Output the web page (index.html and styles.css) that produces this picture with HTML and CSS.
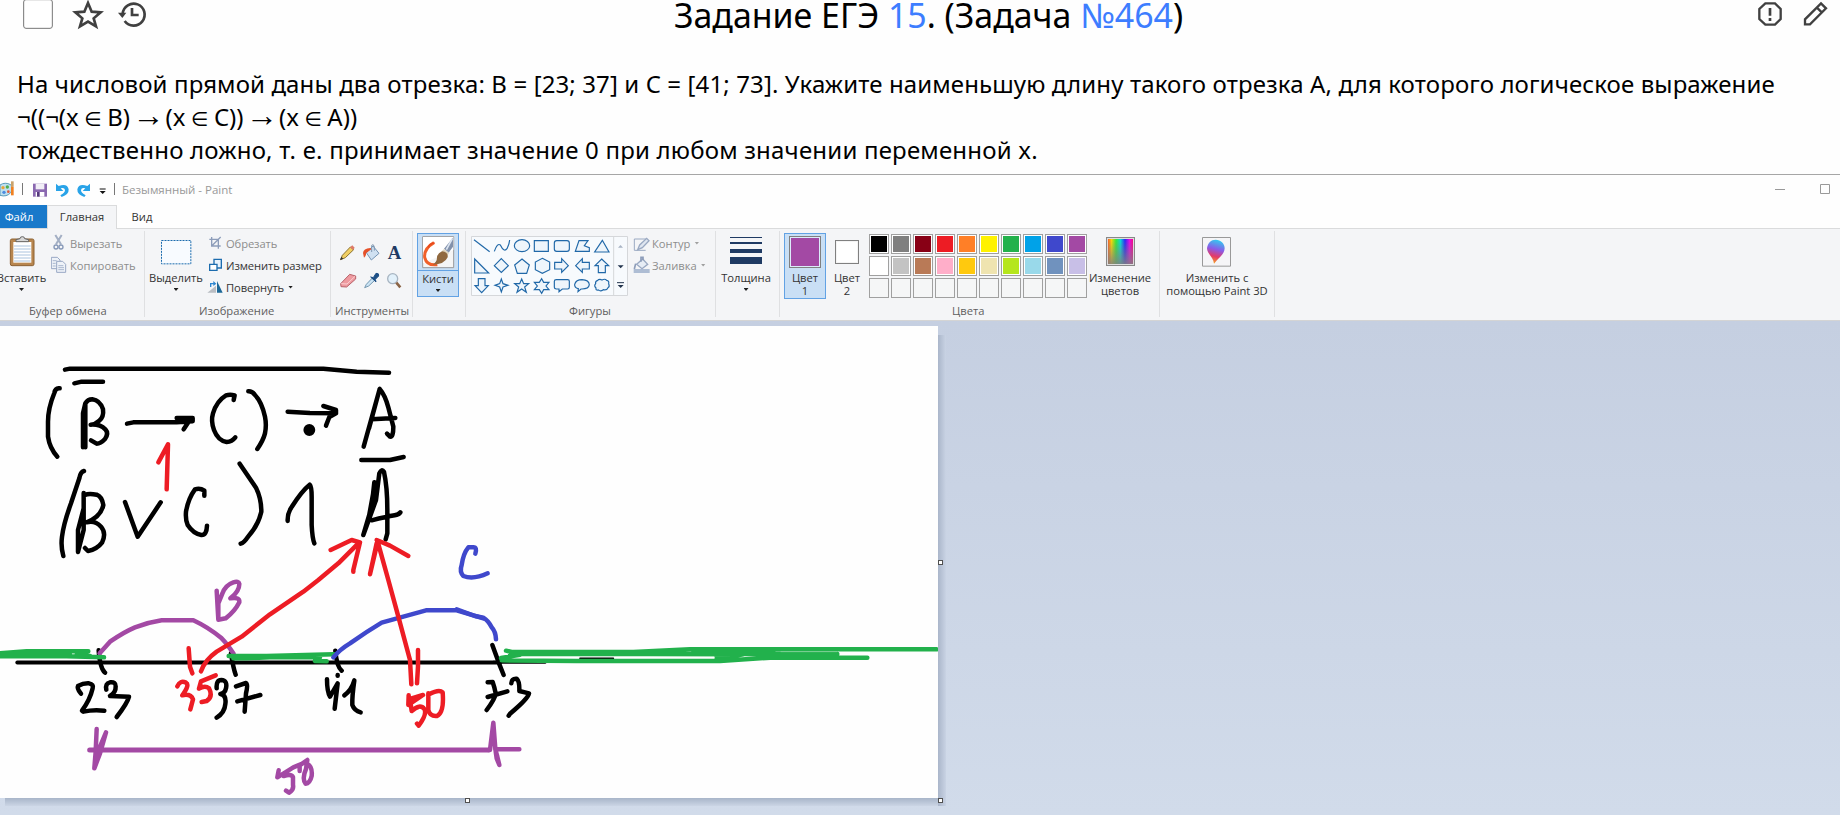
FILE: index.html
```html
<!DOCTYPE html>
<html lang="ru">
<head>
<meta charset="utf-8">
<title>Задание ЕГЭ 15</title>
<link rel="stylesheet" href="styles.css">
</head>
<body>
<header class="task-head">
  <svg class="head-left" width="150" height="30" viewBox="0 0 450 90">
    <rect x="71" y="-1" width="86" height="86" rx="7" fill="#fff" stroke="#767676" stroke-width="3"/>
    <path d="M264 9 275 35 302 37 281 55 288 79 264 65 240 79 247 55 226 37 253 35Z" fill="none" stroke="#404040" stroke-width="8"/>
    <path d="M368 41A33 33 0 1 1 374 63" fill="none" stroke="#404040" stroke-width="8"/>
    <path d="M354 38H379L367 54Z" fill="#404040"/>
    <path d="M396 24V45H416" fill="none" stroke="#404040" stroke-width="8"/>
  </svg>
  <h1 class="task-title">Задание ЕГЭ <a>15</a>. (Задача <a>№464</a>)</h1>
  <svg class="head-right" width="90" height="30" viewBox="1050 0 270 90">
    <path d="M1096 10H1125L1142 27V57L1125 74H1096L1078 57V27Z" fill="none" stroke="#404040" stroke-width="7"/>
    <path d="M1110 24V47M1110 54V63" stroke="#404040" stroke-width="8"/>
    <path d="M1215 73V58L1263 10 1278 25 1230 73ZM1250 22 1266 38" fill="none" stroke="#404040" stroke-width="7"/>
  </svg>
</header>
<main class="task-text">
  <p class="l1">На числовой прямой даны два отрезка: B = [23; 37] и C = [41; 73]. Укажите наименьшую длину такого отрезка A, для которого логическое выражение</p>
  <p class="l2">¬((¬(x <span class="in">∈</span> B) <span class="to">→</span> (x <span class="in">∈</span> C)) <span class="to">→</span> (x <span class="in">∈</span> A))</p>
  <p class="l3">тождественно ложно, т. е. принимает значение 0 при любом значении переменной x.</p>
</main>
<section class="paint">
  <div class="titlebar">
    <svg width="118" height="30" viewBox="0 15 354 90">
      <path d="M0 45Q15 35 32 44Q42 55 32 68Q20 82 0 76Z" fill="#bfe0ef" stroke="#5b9cba" stroke-width="3"/>
      <circle cx="9" cy="53" r="5" fill="#e8a33c"/><circle cx="22" cy="51" r="5" fill="#4fae4f"/><circle cx="12" cy="67" r="5" fill="#4c8be0"/><circle cx="25" cy="65" r="4" fill="#e05a3c"/>
      <path d="M37 34V50" stroke="#caa26b" stroke-width="8"/><path d="M37 50V76" stroke="#f08020" stroke-width="8"/>
      <path d="M67.500 39V75M343.500 39V75" stroke="#777" stroke-width="3"/>
      <path d="M99 41H141V80H99Z" fill="#8a68b0"/><path d="M107 41H133V58H107Z" fill="#f1eef6"/><path d="M107 66H133V80H107Z" fill="#fff"/><path d="M111 66H119V80H111Z" fill="#55397c"/>
      <path d="M168 41V63H190L182 55Q193 51 195 60Q195 69 181 76L185 81Q207 74 206 58Q202 39 176 48Z" fill="#29a3e8"/>
      <path d="M270 41V63H248L256 55Q245 51 243 60Q243 69 257 76L253 81Q231 74 232 58Q236 39 262 48Z" fill="#29a3e8"/>
      <path d="M299 57H317" stroke="#111" stroke-width="3"/><path d="M299 63H317L308 72Z" fill="#111"/>
    </svg>
    <span class="win-title">Безымянный - Paint</span>
    <svg class="win-buttons" width="65" height="30" viewBox="0 0 65 30"><path d="M0 14.500H10" stroke="#999"/><path d="M45.500 9.500H54.500V18.500H45.500Z" fill="none" stroke="#999"/></svg>
  </div>
  <nav class="tabs"><span class="tab file">Файл</span><span class="tab active">Главная</span><span class="tab view">Вид</span></nav>
  <div class="ribbon">
    <div class="group g1">
      <div class="tools">
        <div class="big paste"><svg width="43" height="38" viewBox="0 183 129 114"><rect x="31" y="207" width="71" height="80" rx="5" fill="#b8864f" stroke="#8d6233" stroke-width="3"/><path d="M40 216H94V278H40Z" fill="#fff"/><path d="M42 228H92M42 237H92M42 246H92M42 255H92M42 264H92M42 273H92" stroke="#aac3de" stroke-width="3"/><path d="M48 215V209L60 206Q60 200 67 200Q74 200 74 206L86 209V215Z" fill="#d8d8d8" stroke="#666" stroke-width="3"/></svg><span>Вставить</span><i class="arr"></i></div>
        <div class="rows">
          <div class="row off"><svg width="16" height="22" viewBox="153 189 48 66"><path d="M166 198 183 226M185 198 168 226" stroke="#a3afc4" stroke-width="6"/><circle cx="168" cy="234" r="6" fill="none" stroke="#8698b8" stroke-width="4"/><circle cx="183" cy="234" r="6" fill="none" stroke="#8698b8" stroke-width="4"/></svg><span>Вырезать</span></div>
          <div class="row off"><svg width="16" height="22" viewBox="153 255 48 66"><path d="M154 265H172L180 273V299H154Z" fill="#eef2f8" stroke="#98a8c4" stroke-width="3"/><path d="M170 277H188L197 286V310H170Z" fill="#eef2f8" stroke="#98a8c4" stroke-width="3"/><path d="M158 275H170M158 283H167M158 291H167M175 290H190M175 296H192M175 302H192" stroke="#a9b7cf" stroke-width="3"/></svg><span>Копировать</span></div>
        </div>
      </div>
      <div class="caption" style="--x:29px">Буфер обмена</div>
    </div>
    <div class="group g2">
      <div class="tools">
        <div class="big select"><svg width="60" height="38" viewBox="438 183 180 114"><path d="M484.500 211.500H572.500V281.500H484.500Z" fill="#f8fbff" stroke="#1c6cae" stroke-width="3" stroke-dasharray="6 3"/></svg><span>Выделить</span><i class="arr"></i></div>
        <div class="rows">
          <div class="row off"><svg width="18" height="22" viewBox="621 189 54 66"><path d="M635 204V231H662M628 211H655V239M635 231 662 204" fill="none" stroke="#8d9dba" stroke-width="4"/></svg><span>Обрезать</span></div>
          <div class="row"><svg width="18" height="22" viewBox="621 255 54 66"><path d="M642 271H664V297H642Z" fill="#e9f3fc" stroke="#1c6cae" stroke-width="4"/><path d="M629 286H651V304H629Z" fill="#fff" stroke="#1c6cae" stroke-width="4"/></svg><span>Изменить размер</span></div>
          <div class="row"><svg width="18" height="22" viewBox="621 321 54 66"><path d="M622 371 648 350V371Z" fill="#b9bdc3"/><path d="M651 336V371H668Z" fill="#1c6797"/><path d="M632 354V344H642" fill="none" stroke="#2e86d0" stroke-width="4"/><path d="M640 336 649 344 640 351Z" fill="#2e86d0"/></svg><span>Повернуть</span><i class="arr"></i></div>
        </div>
      </div>
      <div class="caption" style="--x:54px">Изображение</div>
    </div>
    <div class="group g3">
      <div class="tools"><svg width="80" height="76" viewBox="33 33 240 228">
        <path d="M62 119 67 106 91 81 101 89 76 113Z" fill="#f1cf63" stroke="#8d7433" stroke-width="3"/><path d="M90 82 97 76 104 83 99 90Z" fill="#dd7a68"/><path d="M60 120 64 110 70 116Z" fill="#333"/>
        <path d="M139 98 159 78 177 100 154 120Z" fill="#cfe0f1" stroke="#7594b4" stroke-width="3"/><path d="M155 96V76Q160 70 163 80V92" fill="none" stroke="#8198b2" stroke-width="3"/><path d="M151 84Q130 86 129 99L132 113Q139 108 138 100L154 88Z" fill="#e5512a"/>
        <text x="203" y="118" class="glyph-a">A</text>
        <path d="M62 191 89 163 107 168 107 177 80 201 63 200Z" fill="#ee9aa0" stroke="#b9646c" stroke-width="3"/><path d="M64 191 81 192 105 169" fill="none" stroke="#fbd0d2" stroke-width="3"/>
        <path d="M134 203 139 193 157 174 164 181 146 198Z" fill="#cbe4f5" stroke="#7397b0" stroke-width="3"/><path d="M152 171 160 173 168 160Q178 159 176 168L166 178 168 186Z" fill="#1d4f86" stroke="#1d4f86" stroke-width="3"/>
        <circle cx="218" cy="176" r="15" fill="#e2f1fb" stroke="#a7b4c1" stroke-width="4"/><path d="M229 188 241 202" stroke="#8a6446" stroke-width="8"/>
      </svg></div>
      <div class="caption" style="--x:4px">Инструменты</div>
    </div>
    <div class="group g4">
      <div class="brush"><svg width="40" height="36" viewBox="294 42 120 108"><path d="M308 50H401V143H308Z" fill="#f5f5f5" stroke="#999" stroke-width="3"/><path d="M309 51H400V90L309 130Z" fill="#fff"/><path d="M342 68Q312 85 314 112Q320 138 352 134" fill="none" stroke="#f0602a" stroke-width="9"/><path d="M325 83Q328 70 344 69" fill="none" stroke="#e8491c" stroke-width="5"/><path d="M399 53V80L386 98 372 86Z" fill="#8291ab"/><path d="M397 56 379 89" stroke="#dce5f1" stroke-width="5"/><path d="M372 87 387 99 382 107 365 94Z" fill="#ddd3bd"/><path d="M366 94Q385 96 383 112Q373 134 338 134Q352 126 351 110Q354 99 366 94Z" fill="#90683e"/></svg><span>Кисти</span><i class="arr"></i></div>
    </div>
    <div class="group g5">
      <div class="tools">
        <svg class="shapes" width="157" height="60" viewBox="453 48 471 180">
          <path d="M454.500 49.500H922.500V226.500H454.500Z" fill="#f7fafd" stroke="#d5d7da" stroke-width="3"/><path d="M881 50V226" stroke="#d5d7da" stroke-width="3"/>
          <g fill="#eef5fb" stroke="#2068a8" stroke-width="3.500">
            <path d="M462 59 509 95"/><path d="M523 94Q532 68 541 75Q552 98 561 86Q568 72 569 60" fill="none"/><ellipse cx="606" cy="77" rx="23" ry="18"/><path d="M643 62H685V94H643Z"/><rect x="703" y="62" width="45" height="32" rx="7"/><path d="M777 62H804L793 77 808 83V94H766Z"/><path d="M847 61 867 96H824Z"/>
            <path d="M464 117V159H506Z"/><path d="M544 116 565 137 544 157 523 137Z"/><path d="M606 117 628 135 620 160H592L584 135Z"/><path d="M667 115 689 126V149L667 160 646 149V126Z"/><path d="M704 127H725V116L745 137 725 157V147H704Z"/><path d="M808 127H787V116L767 137 787 157V147H808Z"/><path d="M845 117 866 137H856V158H835V137H825Z"/>
            <path d="M475 176H495V197H505L485 218 465 197H475Z"/><path d="M544 177 549 191 564 196 549 201 544 216 539 201 525 196 539 191Z"/><path d="M605 177 611 191 626 191 614 201 619 217 605 207 591 217 596 201 584 191 599 191Z"/><path d="M665 176 671 187H687L678 198 687 209H671L665 220 658 209H643L652 198 643 187H658Z"/><path d="M709 179H743Q748 179 748 184V202Q748 207 743 207H727L717 215V207H709Q703 207 703 202V184Q703 179 709 179Z"/><path d="M775 206Q763 203 764 193Q768 179 786 179Q807 180 808 194Q806 208 783 207L774 215Z"/><path d="M827 191Q825 184 832 182Q838 176 846 180Q855 175 860 181Q868 182 866 191Q870 200 864 203Q860 212 850 209Q841 216 836 210Q826 212 828 204Q821 198 827 191Z"/>
          </g>
          <path d="M894 83H909L901.500 75Z" fill="#a9b4c4"/><path d="M893 136H911L902 145ZM893 195H911L902 204Z" fill="#25364f"/><path d="M891 188H912" stroke="#25364f" stroke-width="3"/>
        </svg>
        <div class="rows fillrows">
          <div class="row off"><svg width="18" height="22" viewBox="40 39 54 66"><path d="M80 60H44V94H78" fill="none" stroke="#9aa9c2" stroke-width="3"/><path d="M54 92 60 78 81 58 88 65 68 86Z" fill="#dfe6f0" stroke="#9aa9c2" stroke-width="4"/></svg><span>Контур</span><i class="arr"></i></div>
          <div class="row off"><svg width="18" height="22" viewBox="40 105 54 66"><path d="M42 150H90V162H42Z" fill="#aebdd4"/><path d="M51 136 69 120 84 136 67 149Z" fill="#e7edf5" stroke="#9aa9c2" stroke-width="4"/><path d="M64 128V115H70V124M48 134 44 150" fill="none" stroke="#8d9dba" stroke-width="5"/></svg><span>Заливка</span><i class="arr"></i></div>
        </div>
      </div>
      <div class="caption" style="--x:103px">Фигуры</div>
    </div>
    <div class="group g6">
      <div class="big thick"><svg width="60" height="38" viewBox="288 33 180 114"><path d="M330 52.500H426" stroke="#1f3a63" stroke-width="3"/><path d="M330 69H426" stroke="#1f3a63" stroke-width="6"/><path d="M330 93H426" stroke="#1f3a63" stroke-width="12"/><path d="M330 121.500H426" stroke="#1f3a63" stroke-width="21"/></svg><span>Толщина</span><i class="arr"></i></div>
    </div>
    <div class="group g7">
      <div class="tools">
        <div class="color chosen"><i class="sw one"></i><span>Цвет<br>1</span></div>
        <div class="color"><i class="sw two"></i><span>Цвет<br>2</span></div>
        <div class="palette"><i style="--c:#000"></i><i style="--c:#7f7f7f"></i><i style="--c:#880015"></i><i style="--c:#ed1c24"></i><i style="--c:#ff7f27"></i><i style="--c:#fff200"></i><i style="--c:#22b14c"></i><i style="--c:#00a2e8"></i><i style="--c:#3f48cc"></i><i style="--c:#a349a4"></i><i style="--c:#fff"></i><i style="--c:#c3c3c3"></i><i style="--c:#b97a57"></i><i style="--c:#ffaec9"></i><i style="--c:#ffc90e"></i><i style="--c:#efe4b0"></i><i style="--c:#b5e61d"></i><i style="--c:#99d9ea"></i><i style="--c:#7092be"></i><i style="--c:#c8bfe7"></i><i class="e"></i><i class="e"></i><i class="e"></i><i class="e"></i><i class="e"></i><i class="e"></i><i class="e"></i><i class="e"></i><i class="e"></i><i class="e"></i></div>
        <div class="big edit"><i class="rainbow"></i><span>Изменение<br>цветов</span></div>
      </div>
      <div class="caption" style="--x:172px">Цвета</div>
    </div>
    <div class="group g8">
      <div class="big p3d"><svg width="30" height="38" viewBox="1026 33 90 114"><defs><linearGradient id="pin" x1="0.600" y1="0" x2="0.400" y2="1"><stop offset="0" stop-color="#30cdf0"/><stop offset=".4" stop-color="#8a5be8"/><stop offset=".7" stop-color="#e43a68"/><stop offset="1" stop-color="#f5a623"/></linearGradient></defs><path d="M1027.500 52.500H1111.500V138.500H1027.500Z" fill="#f5f5f7" stroke="#999" stroke-width="3"/><path d="M1062 131C1060 111 1041 102 1041 85C1043 68 1053 59 1067 59C1082 59 1094 70 1094 85C1093 105 1075 113 1062 131Z" fill="url(#pin)"/></svg><span>Изменить с<br>помощью Paint 3D</span></div>
    </div>
  </div>
  <div class="workspace">
    <div class="sheet">
    <svg class="drawing" width="938" height="472" viewBox="0 326 938 472">
      <g fill="none" stroke-width="13.500" stroke-linecap="round" stroke-linejoin="round">
        <g transform="translate(0 320) scale(.33333)" stroke="#000">
          <path d="M195 149 210 146H970L1070 155 1167 158"/><path d="M223 190 245 185H309"/>
          <path d="M179 205Q166 203 163 219Q144 265 144 305V350Q149 385 172 410"/>
          <path d="M249 382V280L256 250V382M256 250Q263 238 277 238Q300 241 309 268Q312 290 298 302Q285 314 272 314Q300 312 316 328Q327 340 315 357Q302 371 290 371L273 361"/>
          <path d="M381 311 400 307H530L578 304V294H530L572 296 551 328"/>
          <path d="M701 240 704 226Q690 222 678 226Q650 243 639 280Q632 303 642 330Q654 362 680 366Q696 365 706 352"/>
          <path d="M745 214Q757 213 765 225Q785 245 795 290Q800 315 795 340Q790 360 772 387"/>
          <path d="M863 275 930 279 1008 280V270L970 258M1008 280 988 291 978 317"/><circle cx="928" cy="330" r="11" fill="#000"/>
          <path d="M1091 380 1139 207 1107 325M1139 207Q1155 225 1165 262L1180 320Q1180 352 1170 350L1161 341M1115 298 1186 294"/>
          <path d="M1084 420H1170L1211 411"/>
          <path d="M252 453Q241 456 238 475L213 550Q191 610 186 650Q182 680 190 708"/>
          <path d="M251 519V630L234 696V630L251 565M255 525Q265 520 290 524Q306 530 310 555Q303 590 260 607Q285 600 303 620Q320 640 306 668Q291 688 264 693L255 684"/>
          <path d="M375 546 413 650 482 547"/>
          <path d="M613 527V512Q600 503 585 508Q565 535 558 575Q556 600 563 615Q580 641 604 645Q620 646 621 617"/>
          <path d="M719 431 768 503Q784 535 784 575Q774 618 744 650Q732 668 722 671"/>
          <path d="M863 603Q862 580 875 561Q905 513 929 494Q935 500 935 530V615Q937 655 943 670"/>
          <path d="M1123 487 1115 560 1090 645 1128 540 1138 460Q1145 444 1152 456Q1162 500 1162 570V640L1157 658M1125 490 1105 600M1115 601Q1160 590 1184 586Q1196 584 1201 577"/>
        </g>
        <g transform="translate(0 560) scale(.33333)">
          <g stroke="#000"><path d="M52 307.500H1500" stroke-width="12"/><path d="M296 271Q300 325 315 338M693 280Q700 325 707 344M1006 272Q1010 320 1025 332"/>
          <path d="M243 401Q230 385 234 378Q250 369 267 370Q282 373 278 385Q270 420 246 452L250 455Q280 448 313 452"/><path d="M319 389Q315 370 330 367Q348 365 347 379Q348 397 330 408L387 410Q382 430 350 471"/>
          <path d="M650 385Q648 360 664 360Q683 361 678 385Q675 400 661 402Q680 405 676 432Q674 458 650 473M708 379 738 369Q745 372 738 400L734 455M712 424 781 405"/><path d="M981 358Q981 395 990 410L1013 370 1004 446M1033 406Q1055 390 1063 361Q1056 410 1057 435Q1063 452 1082 457"/><path d="M1013 345V347"/></g>
          <g stroke="#a349a4"><path d="M299 280 330 245Q370 217 405 202Q445 187 485 181H580Q625 202 665 235Q680 250 701 281"/><path d="M650 92 655 179V130L667 101Q675 76 700 67Q716 62 718 72Q718 95 691 115Q720 110 718 127Q704 155 677 175L655 179"/>
          <path d="M269 570H1465" stroke-width="15"/><path d="M290 507 287 575 283 625 300 580 318 517 300 560 288 600"/><path d="M836 631 832 652 880 622 911 609M851 648Q875 640 879 652V675Q882 690 867 698L858 692M899 633V616L922 600 918 627M922 612Q938 620 935 648Q930 670 917 671Q905 657 918 627"/></g>
          <g stroke="#22b14c"><path d="M-8 280 80 274H265M-8 289 200 289 312 292M-8 284H210M230 284 270 288"/><path d="M686 288H800L1002 283M700 295H740L840 290 960 292M780 292H950L945 303 980 304"/></g>
          <g stroke="#3f48cc"><path d="M1000 292Q1020 268 1050 250Q1100 215 1145 188Q1210 170 1278 151H1370L1430 169 1450 175"/></g>
        </g>
        <g transform="translate(460 520) scale(.33333)">
          <g stroke="#3f48cc"><path d="M-10 268 45 288 70 293Q85 302 95 322Q107 335 108 358"/><path d="M46 101Q52 82 40 82H25Q10 100 5 135Q-2 155 10 168Q40 180 83 160"/></g>
          <g stroke="#000"><path d="M100 427H255" stroke-width="9"/><path d="M97 375 117 430 131 465"/><path d="M83 487 98 486Q103 500 107 520Q106 535 80 570M83 531 142 514M154 490Q155 475 170 476Q179 484 178 513L207 520Q205 535 150 581L146 587"/><path d="M360 415H460" stroke-width="5"/></g>
          <path d="M85 690H90L100 608 106 687 110 715 118 735 112 710 106 688H178" stroke="#a349a4"/>
          <path d="M138 392 155 396H520L690 388H1430M150 402H550L1132 402M123 414 180 404M125 421 350 423H780L930 413H1222M570 402 850 403 770 417M700 394H940M820 403 770 410" stroke="#22b14c"/>
          <path d="M963 395H1130" stroke="#8fd4a4" stroke-width="2"/>
        </g>
        <g transform="translate(0 320) scale(.33333)" stroke="#ed1c24"><path d="M475 427 504 373 500 508"/><path d="M603 1054Q615 1020 650 995L725 950 810 883 910 815 955 780 1015 730 1075 670M992 690 1055 660 1080 667 1060 750V755"/><path d="M1234 1093 1230 1020 1195 890 1165 780 1133 665 1110 763 1130 670M1130 660 1170 677 1225 708"/><path d="M566 985 570 1040 577 1060M1254 990V1040L1251 1090"/><path d="M532 1099Q540 1080 558 1088Q570 1095 547 1126Q572 1120 579 1138L571 1168M647 1066 603 1084 597 1106Q615 1095 627 1105Q640 1130 620 1143L605 1146M1226 1126 1225 1155 1269 1125 1230 1137 1235 1173Q1260 1150 1273 1167Q1282 1183 1256 1217L1251 1211M1287 1123Q1317 1107 1328 1117Q1333 1178 1311 1188Q1290 1190 1285 1170V1120"/></g>
      </g>
    </svg>
    <i class="handle h1"></i><i class="handle h2"></i><i class="handle h3"></i>
    </div>
  </div>
</section>
</body>
</html>
```
FILE: styles.css
```css
* { box-sizing: border-box; }
body { margin: 0; width: 1840px; height: 815px; overflow: hidden; background: #fefefe; color: #000; font-family: "Noto Sans", "Open Sans", sans-serif; }
svg { display: block; flex: none; }
i { font-style: normal; display: block; flex: none; }
.task-head { display: flex; height: 67px; }
.task-title { flex: 1; margin: 0; padding-right: 43px; text-align: center; font-size: 33.9px; line-height: 30px; font-weight: 400; white-space: nowrap; }
.task-title a { color: #3d7dff; }
.task-text { height: 107px; padding-left: 17px; font-size: 24px; line-height: 33px; white-space: nowrap; }
.task-text p { margin: 0; height: 33px; width: max-content; }
.l1 { letter-spacing: .12px; }
.l3 { letter-spacing: .2px; }
.in, .to { display: inline-block; text-align: center; line-height: 20px; }
.in { width: 16px; font-family: "DejaVu Sans", sans-serif; font-size: 20px; text-indent: -1px; }
.to { width: 23px; font-family: "Liberation Serif", serif; font-size: 32px; text-indent: -4px; }
.paint { height: 641px; border-top: 1px solid #a6a6a6; display: flex; flex-direction: column; font-family: "Open Sans", "Noto Sans", sans-serif; font-size: 11.2px; color: #333; }
.titlebar { display: flex; height: 30px; flex: none; }
.win-title { padding: 6px 0 0 4px; line-height: 17px; font-size: 11.5px; color: #999; flex: 1; white-space: nowrap; }
.tabs { display: flex; height: 24px; flex: none; border-bottom: 1px solid #dadbdc; line-height: 24px; }
.tab { text-align: center; }
.file { width: 47px; height: 23px; padding-right: 9px; background: #1979ca; color: #fff; }
.active { width: 70px; height: 24px; background: #f4f5f7; border: 1px solid #dadbdc; border-bottom: 0; line-height: 22px; }
.view { width: 50px; }
.ribbon { display: flex; height: 92px; flex: none; background: #f4f5f7; border-bottom: 1px solid #d4d4d4; padding-top: 2px; }
.group { height: 86px; flex: none; border-right: 1px solid #dfe0e2; display: flex; flex-direction: column; }
.tools { display: flex; height: 72px; flex: none; }
.caption { padding-left: var(--x); line-height: 16px; color: #5f5f5f; white-space: nowrap; }
.g1 { width: 145px; } .g2 { width: 186px; } .g3 { width: 82px; } .g4 { width: 53px; } .g5 { width: 250px; } .g6 { width: 64px; } .g7 { width: 380px; } .g8 { width: 115px; }
.big { display: flex; flex-direction: column; align-items: center; line-height: 13px; text-align: center; white-space: nowrap; }
.big > span { margin-top: 2px; }
.arr { width: 5px; height: 3px; background: #1e1e1e; clip-path: polygon(0 0, 100% 0, 50% 100%); }
.big .arr, .brush .arr { margin-top: 4px; }
.paste { width: 43px; }
.thick { width: 60px; }
.select { width: 60px; margin-left: 1px; }
.rows { display: flex; flex-direction: column; padding-top: 1px; }
.g1 .rows { padding-left: 8px; }
.g2 .rows { padding-left: 1px; }
.row { display: flex; align-items: center; height: 22px; gap: 3px; white-space: nowrap; }
.g2 .row, .fillrows .row { gap: 1px; }
.g2 .row { letter-spacing: -.1px; }
.row .arr { margin-left: 3px; }
.off { color: #8d8d8d; }
.off .arr { background: #a0a0a0; }
.glyph-a { font: bold 56px "Liberation Serif", serif; fill: #1f3a63; }
.brush { width: 42px; height: 64px; margin: 2px 0 0 4px; background: #c9dff5; border: 1px solid #62a2e4; display: flex; flex-direction: column; align-items: center; line-height: 13px; }
.brush > span { border-top: 1px solid #62a2e4; width: 40px; text-align: center; padding-top: 1px; }
.shapes { margin: 5px 0 0 5px; }
.fillrows { padding-left: 5px; }
.color { width: 42px; height: 66px; margin: 2px 0 0 4px; display: flex; flex-direction: column; align-items: center; text-align: center; line-height: 13px; border: 1px solid transparent; }
.color + .color { margin-left: 0; }
.color > span { margin-top: auto; padding-bottom: 1px; }
.chosen { background: #c9dff5; border-color: #62a2e4; }
.sw { border: 1px solid #808080; }
.one { width: 32px; height: 32px; margin-top: 2px; background: #a349a4; box-shadow: inset 0 0 0 1px #dcebfa; }
.two { width: 24px; height: 24px; margin-top: 6px; background: #fff; box-shadow: inset 0 0 0 1px #f4f4f4; }
.palette { display: grid; grid-template-columns: repeat(10, 20px); grid-auto-rows: 20px; gap: 2px; padding-top: 3px; margin-left: 1px; }
.palette i { border: 1px solid #a0a0a0; background: var(--c); box-shadow: inset 0 0 0 1px #fff; }
.palette .e { box-shadow: none; background: #f5f6f7; }
.edit { width: 64px; margin-left: 1px; }
.rainbow { width: 29px; height: 29px; margin: 6px 0 3px; border: 1px solid #888; box-shadow: inset 0 0 0 1px #ddd; background: linear-gradient(transparent, rgba(128,128,128,.9)), linear-gradient(90deg, #f33, #fd0, #3e3, #0dd, #22f, #e0e, #f06); }
.workspace { height: 494px; background: linear-gradient(#c5cfe1, #d1dbea); padding-top: 5px; }
.sheet { position: relative; width: 938px; height: 472px; background: #fefefe; }
.sheet::before, .sheet::after { content: ""; position: absolute; }
.sheet::before { left: 938px; top: 9px; width: 8px; height: 471px; background: linear-gradient(90deg, #aab6ca, #c9d3e4); }
.sheet::after { left: 5px; top: 472px; width: 933px; height: 8px; background: linear-gradient(#a8b5c9, #cbd5e5); }
.handle { position: absolute; z-index: 1; width: 5px; height: 5px; background: #fff; border: 1px solid #505050; }
.h1 { left: 938px; top: 234px; } .h2 { left: 465px; top: 472px; } .h3 { left: 938px; top: 472px; }
```
